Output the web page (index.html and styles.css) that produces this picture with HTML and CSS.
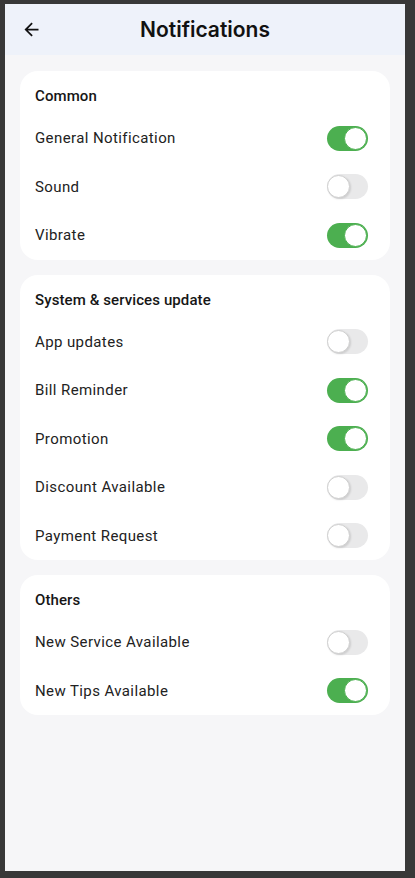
FILE: index.html
```html
<!DOCTYPE html>
<html lang="en">
<head>
<meta charset="utf-8">
<title>Notifications</title>
<link rel="stylesheet" href="styles.css">
</head>
<body>
<div class="screen">
  <header class="appbar">
    <button class="back" aria-label="Back">
      <svg viewBox="0 0 24 24" width="21" height="21"><path d="M20 11H7.83l5.59-5.59L12 4l-8 8 8 8 1.41-1.41L7.83 13H20v-2z" fill="#111"/></svg>
    </button>
    <h1 class="title">Notifications</h1>
  </header>
  <main class="content">
    <section class="card">
      <h2 class="card-title">Common</h2>
      <div class="row"><span class="label">General Notification</span><span class="toggle on"><span class="thumb"></span></span></div>
      <div class="row"><span class="label">Sound</span><span class="toggle"><span class="thumb"></span></span></div>
      <div class="row"><span class="label">Vibrate</span><span class="toggle on"><span class="thumb"></span></span></div>
    </section>
    <section class="card">
      <h2 class="card-title">System &amp; services update</h2>
      <div class="row"><span class="label">App updates</span><span class="toggle"><span class="thumb"></span></span></div>
      <div class="row"><span class="label">Bill Reminder</span><span class="toggle on"><span class="thumb"></span></span></div>
      <div class="row"><span class="label">Promotion</span><span class="toggle on"><span class="thumb"></span></span></div>
      <div class="row"><span class="label">Discount Available</span><span class="toggle"><span class="thumb"></span></span></div>
      <div class="row"><span class="label">Payment Request</span><span class="toggle"><span class="thumb"></span></span></div>
    </section>
    <section class="card">
      <h2 class="card-title">Others</h2>
      <div class="row"><span class="label">New Service Available</span><span class="toggle"><span class="thumb"></span></span></div>
      <div class="row"><span class="label">New Tips Available</span><span class="toggle on"><span class="thumb"></span></span></div>
    </section>
  </main>
</div>
</body>
</html>
```

FILE: styles.css
```css
html, body {
  margin: 0;
  padding: 0;
}
body {
  background: #383838;
  padding: 4px 10px 7px 5px;
  height: 878px;
  box-sizing: border-box;
  font-family: Roboto, "Noto Sans", sans-serif;
  color: #1c1c1c;
}
.screen {
  height: 867px;
  background: #f6f6f8;
  display: flex;
  flex-direction: column;
}
.appbar {
  height: 51px;
  flex: none;
  background: #eef2fa;
  display: flex;
  align-items: center;
  position: relative;
}
.back {
  border: 0;
  background: none;
  padding: 0;
  margin-left: 16px;
  width: 21px;
  height: 21px;
  display: flex;
  cursor: pointer;
}
.title {
  position: absolute;
  left: 0;
  right: 0;
  text-align: center;
  margin: 0;
  font-family: Inter, Roboto, sans-serif;
  font-weight: 600;
  font-size: 21px;
  color: #111;
  pointer-events: none;
}
.content {
  padding: 16px 15px;
  display: flex;
  flex-direction: column;
  gap: 15px;
}
.card {
  background: #fff;
  border-radius: 18px;
  padding: 15px 22px 0 15px;
}
.card-title {
  margin: 0 0 8px;
  font-size: 15px;
  line-height: 20px;
  font-weight: 500;
  color: #161616;
  letter-spacing: 0.1px;
}
.row {
  height: 48.5px;
  display: flex;
  align-items: center;
  justify-content: space-between;
}
.label {
  font-size: 15px;
  letter-spacing: 0.4px;
  color: #222;
}
.toggle {
  width: 41px;
  height: 25px;
  border-radius: 13px;
  background: #e9e9ea;
  position: relative;
  flex: none;
}
.toggle .thumb {
  position: absolute;
  top: 1px;
  left: 0;
  width: 23px;
  height: 23px;
  box-sizing: border-box;
  border-radius: 50%;
  background: #fff;
  border: 1px solid #cfcfcf;
  box-shadow: 1px 1px 2px rgba(0,0,0,0.12);
}
.toggle.on {
  background: #4caf50;
}
.toggle.on .thumb {
  left: auto;
  right: 1px;
  border-color: #4caf50;
  box-shadow: none;
}
```
